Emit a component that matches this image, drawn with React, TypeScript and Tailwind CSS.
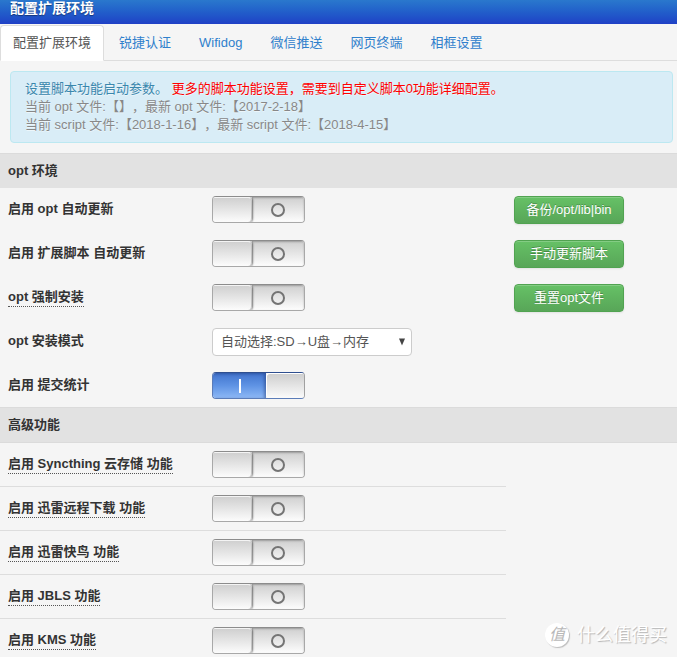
import { useState, type ReactNode } from "react";

const TABS = ["配置扩展环境", "锐捷认证", "Wifidog", "微信推送", "网页终端", "相框设置"];

const FEATURES = [
  { id: "syncthing", label: "启用 Syncthing 云存储 功能" },
  { id: "xunlei", label: "启用 迅雷远程下载 功能" },
  { id: "kuainiao", label: "启用 迅雷快鸟 功能" },
  { id: "jbls", label: "启用 JBLS 功能" },
  { id: "kms", label: "启用 KMS 功能" },
];

function Toggle({ id, initial = false }: { id: string; initial?: boolean }) {
  const [on, setOn] = useState(initial);
  return (
    <div
      className={`relative flex h-[27px] w-[93px] overflow-hidden rounded border ${
        on ? "border-[#5b7cb8] border-t-[#2f4f8f] border-r-[#a0a0a0]" : "border-[#a8a8a8] border-t-[#8c8c8c]"
      }`}
    >
      {on ? (
        <>
          <span className="flex flex-1 items-center justify-center bg-linear-to-b from-[#4173cd] via-[#5f93e4] to-[#8db8f5] shadow-[inset_-2px_1px_3px_rgba(20,40,100,0.4)]">
            <span className="h-3.5 w-0.5 bg-white" />
          </span>
          <span className="w-[38px] rounded-l-sm border-t border-l border-white bg-linear-to-b from-[#cfcfcf] to-[#fbfbfb]" />
        </>
      ) : (
        <>
          <span className="z-10 w-[39px] rounded-r-sm border-t border-r border-t-[#f4f4f4] border-r-[#c4c4c4] bg-linear-to-b from-[#d0d0d0] to-[#fcfcfc] shadow-[1px_0_2px_rgba(0,0,0,0.45)]" />
          <span className="flex flex-1 items-center justify-center bg-linear-to-b from-[#cfcfcf] via-[#e6e6e6] to-[#fdfdfd] shadow-[inset_0_1px_2px_rgba(0,0,0,0.25)]">
            <svg className="mt-px size-3.5" viewBox="0 0 14 14" fill="none" aria-hidden="true">
              <circle cx="7" cy="7" r="6" stroke="#747474" strokeWidth="2" />
            </svg>
          </span>
        </>
      )}
      <input
        id={id}
        type="checkbox"
        checked={on}
        onChange={(e) => setOn(e.target.checked)}
        className="absolute inset-0 z-20 size-full cursor-pointer opacity-0"
      />
    </div>
  );
}

function GreenButton({ children }: { children: ReactNode }) {
  return (
    <button
      type="button"
      className="h-7 w-[110px] rounded border border-[#51a351] bg-linear-to-b from-[#66c166] to-[#58a658] text-[13px] leading-[18px] text-white shadow-[inset_0_1px_0_rgba(255,255,255,0.2),0_1px_2px_rgba(0,0,0,0.08)] [text-shadow:0_-1px_0_rgba(0,0,0,0.25)]"
    >
      {children}
    </button>
  );
}

function SectionTitle({ divided, children }: { divided?: boolean; children: ReactNode }) {
  return (
    <h2
      className={`border-[#dbdbdb] bg-[#e2e2e2] px-2 py-2 text-[13px] leading-[18px] font-bold ${
        divided ? "border-y" : "border-t"
      }`}
    >
      {children}
    </h2>
  );
}

type RowProps = {
  id: string;
  label: string;
  hint?: boolean;
  divided?: boolean;
  last?: boolean;
  action?: ReactNode;
  children: ReactNode;
};

function Row({ id, label, hint, divided, last, action, children }: RowProps) {
  const border = divided ? "border-b border-[#dddddd]" : "";
  return (
    <div className="grid grid-cols-[204px_302px_1fr]">
      <div className={`pt-3 pb-2 pl-2 leading-[18px] ${border}`}>
        <label
          htmlFor={id}
          className={`inline-block text-[13px] leading-[18px] font-bold ${
            hint ? "h-[19px] border-b border-dotted border-[#555555]" : ""
          }`}
        >
          {label}
        </label>
      </div>
      <div className={`px-2 pt-2 ${last ? "h-[43px]" : "h-11"} ${border}`}>{children}</div>
      <div className="px-2 pt-2">{action}</div>
    </div>
  );
}

function Watermark() {
  return (
    <div className="absolute right-2.5 bottom-2.5 flex items-center gap-2 text-white">
      <span className="flex size-6 items-center justify-center rounded-full bg-white text-[16px] leading-6 text-[#b8b8b8] italic shadow-[1px_1px_1px_#bcbcbc]">
        值
      </span>
      <span className="text-[18px] leading-6 [text-shadow:1px_1px_1px_#b4b4b4]">什么值得买</span>
    </div>
  );
}

export default function App() {
  const [active, setActive] = useState(0);
  return (
    <main className="relative h-screen overflow-hidden bg-[#f5f5f5] font-['Liberation_Sans','Noto_Sans_CJK_SC',sans-serif] text-[13px] leading-[18px] text-[#333333] [text-spacing-trim:space-all]">
      <h1 className="h-6 bg-linear-to-b from-[#2a78cd] to-[#2040c6] px-2.5 text-[14px] leading-4 font-bold text-white [text-shadow:0_1px_1px_rgba(0,0,0,0.4)]">
        配置扩展环境
      </h1>

      <nav className="flex gap-0.5 border-b border-[#dddddd] pt-px">
        {TABS.map((tab, i) => (
          <a
            key={tab}
            href="#"
            onClick={(e) => {
              e.preventDefault();
              setActive(i);
            }}
            className={`-mb-px rounded-t border px-3 py-2 leading-[18px] whitespace-nowrap ${
              i === active
                ? "border-[#dddddd] border-b-white bg-white text-[#555555]"
                : "border-transparent text-[#2f80cc]"
            }`}
          >
            {tab}
          </a>
        ))}
      </nav>

      <div className="mx-1 mt-2.5 mb-2.5 ml-2.5 rounded border border-[#bce8f1] bg-[#d9edf7] px-3.5 pt-2 pb-2 text-[#888888] [text-shadow:0_1px_0_rgba(255,255,255,0.5)]">
        <p className="text-[#3a87ad]">
          设置脚本功能启动参数。{" "}
          <span className="text-[#ff0000]">更多的脚本功能设置，需要到自定义脚本0功能详细配置。</span>
        </p>
        <p>当前 opt 文件:【】，最新 opt 文件:【2017-2-18】</p>
        <p>当前 script 文件:【2018-1-16】，最新 script 文件:【2018-4-15】</p>
      </div>

      <form onSubmit={(e) => e.preventDefault()}>
        <SectionTitle>opt 环境</SectionTitle>
        <Row id="opt-update" label="启用 opt 自动更新" action={<GreenButton>备份/opt/lib|bin</GreenButton>}>
          <Toggle id="opt-update" />
        </Row>
        <Row id="script-update" label="启用 扩展脚本 自动更新" action={<GreenButton>手动更新脚本</GreenButton>}>
          <Toggle id="script-update" />
        </Row>
        <Row id="opt-force" label="opt 强制安装" hint action={<GreenButton>重置opt文件</GreenButton>}>
          <Toggle id="opt-force" />
        </Row>
        <Row id="opt-mode" label="opt 安装模式">
          <div className="relative w-[200px]">
            <select
              id="opt-mode"
              className="h-7 w-full appearance-none rounded border border-[#cccccc] bg-white px-2 text-[13px] text-[#555555]"
            >
              <option>自动选择:SD→U盘→内存</option>
            </select>
            <svg className="pointer-events-none absolute top-2.5 right-1.5 h-2 w-2" viewBox="0 0 8 8" aria-hidden="true">
              <path d="M1 0.5h6L4 7.5z" fill="#444444" />
            </svg>
          </div>
        </Row>
        <Row id="stats" label="启用 提交统计" last>
          <Toggle id="stats" initial />
        </Row>

        <SectionTitle divided>高级功能</SectionTitle>
        {FEATURES.map(({ id, label }) => (
          <Row key={id} id={id} label={label} hint divided>
            <Toggle id={id} />
          </Row>
        ))}
      </form>

      <Watermark />
    </main>
  );
}
